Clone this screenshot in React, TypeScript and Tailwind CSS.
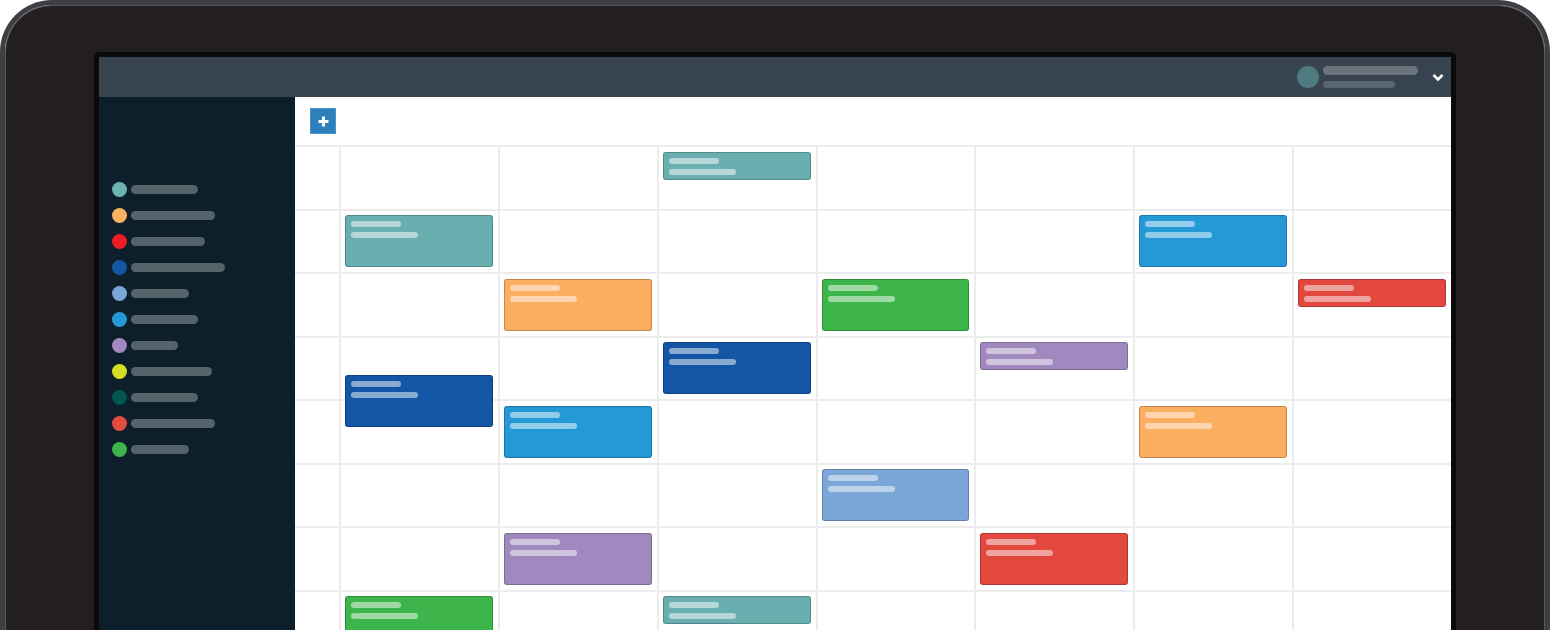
import React from "react";

type Ev = { color: string; tall: boolean; offset?: boolean };

const C = {
  teal: "bg-[#6aafaf]",
  orange: "bg-[#fbad60]",
  green: "bg-[#3db54a]",
  red: "bg-[#e2483e]",
  dblue: "bg-[#1256a5]",
  purple: "bg-[#a189bf]",
  lblue: "bg-[#7ba6d8]",
  blue: "bg-[#2599d6]",
};

// rows x 7 columns
const rows: (Ev | null)[][] = [
  [null, null, { color: C.teal, tall: false }, null, null, null, null],
  [{ color: C.teal, tall: true }, null, null, null, null, { color: C.blue, tall: true }, null],
  [null, { color: C.orange, tall: true }, null, { color: C.green, tall: true }, null, null, { color: C.red, tall: false }],
  [{ color: C.dblue, tall: true, offset: true }, null, { color: C.dblue, tall: true }, null, { color: C.purple, tall: false }, null, null],
  [null, { color: C.blue, tall: true }, null, null, null, { color: C.orange, tall: true }, null],
  [null, null, null, { color: C.lblue, tall: true }, null, null, null],
  [null, { color: C.purple, tall: true }, null, null, { color: C.red, tall: true }, null, null],
  [{ color: C.green, tall: true }, null, { color: C.teal, tall: false }, null, null, null, null],
];

const legend: { color: string; w: string }[] = [
  { color: "bg-[#6bb3b3]", w: "w-[67px]" },
  { color: "bg-[#fbb162]", w: "w-[84px]" },
  { color: "bg-[#ec1c24]", w: "w-[74px]" },
  { color: "bg-[#1356a4]", w: "w-[94px]" },
  { color: "bg-[#7ba6d8]", w: "w-[58px]" },
  { color: "bg-[#2599d6]", w: "w-[67px]" },
  { color: "bg-[#a289c0]", w: "w-[47px]" },
  { color: "bg-[#d4de23]", w: "w-[81px]" },
  { color: "bg-[#02574f]", w: "w-[67px]" },
  { color: "bg-[#e34c3f]", w: "w-[84px]" },
  { color: "bg-[#3db54a]", w: "w-[58px]" },
];

function Event({ ev }: { ev: Ev }) {
  return (
    <div
      className={`relative z-10 ${ev.color} ${ev.tall ? "h-[52px]" : "h-[28px]"} ${
        ev.offset ? "mt-[33px]" : ""
      } rounded-[3px] border border-[rgba(0,0,0,0.22)] pl-[5px] pt-[5px] flex flex-col gap-[5px]`}
    >
      <div className="h-[6px] w-[50px] rounded-full bg-white/50" />
      <div className="h-[6px] w-[67px] rounded-full bg-white/50" />
    </div>
  );
}

export default function App() {
  return (
    <div className="w-[1550px] h-[630px] overflow-hidden bg-white">
      <div className="h-[700px] rounded-t-[52px] border-[5px] border-b-0 border-[#3e3f44]">
        <div className="h-full rounded-t-[47px] border border-b-0 border-[#56575b] bg-[#231f20] pt-[46px] px-[88px]">
          <div className="h-full rounded-[5px] bg-[#0a0a0a] p-[5px]">
            <div className="flex h-full flex-col">
              {/* top header */}
              <div className="flex h-[40px] items-center justify-end bg-[#37444f] pr-[7px]">
                <div className="h-[22px] w-[22px] rounded-full bg-[#4f7b80]" />
                <div className="ml-[4px] flex flex-col gap-[6px]">
                  <div className="h-[9px] w-[95px] rounded-full bg-[#6b747c]" />
                  <div className="h-[7px] w-[72px] rounded-full bg-[#5a6670]" />
                </div>
                <svg className="ml-[14px]" width="12" height="9" viewBox="0 0 12 9">
                  <path d="M1.5 2 L6 6.5 L10.5 2" fill="none" stroke="white" strokeWidth="2.6" />
                </svg>
              </div>
              <div className="flex flex-1">
                {/* sidebar */}
                <div className="w-[196px] shrink-0 bg-[#0c1f2b] pl-[13px] pt-[79px]">
                  {legend.map((l, i) => (
                    <div key={i} className="flex h-[26px] items-center">
                      <div className={`h-[15px] w-[15px] rounded-full ${l.color}`} />
                      <div className={`ml-[4px] h-[9px] rounded-full bg-[#56636b] ${l.w}`} />
                    </div>
                  ))}
                </div>
                {/* main */}
                <div className="flex-1 bg-white">
                  <div className="h-[48px] pl-[15px] pt-[11px]">
                    <div className="flex h-[26px] w-[26px] items-center justify-center border border-[#4a95c9] bg-[#2d80bb]">
                      <svg width="11" height="11" viewBox="0 0 11 11">
                        <path d="M5.5 0.5 V10.5 M0.5 5.5 H10.5" stroke="white" strokeWidth="3" />
                      </svg>
                    </div>
                  </div>
                  <div className="grid grid-cols-[44px_repeat(7,1fr)] auto-rows-[61.5px] gap-[2px] bg-[#ececec] pt-[2px]">
                    {rows.map((r, ri) => (
                      <React.Fragment key={ri}>
                        <div className="bg-white" />
                        {r.map((ev, ci) => (
                          <div key={ci} className="bg-white pl-[4px] pr-[5px] pt-[4.5px]">
                            {ev && <Event ev={ev} />}
                          </div>
                        ))}
                      </React.Fragment>
                    ))}
                  </div>
                </div>
              </div>
            </div>
          </div>
        </div>
      </div>
    </div>
  );
}
